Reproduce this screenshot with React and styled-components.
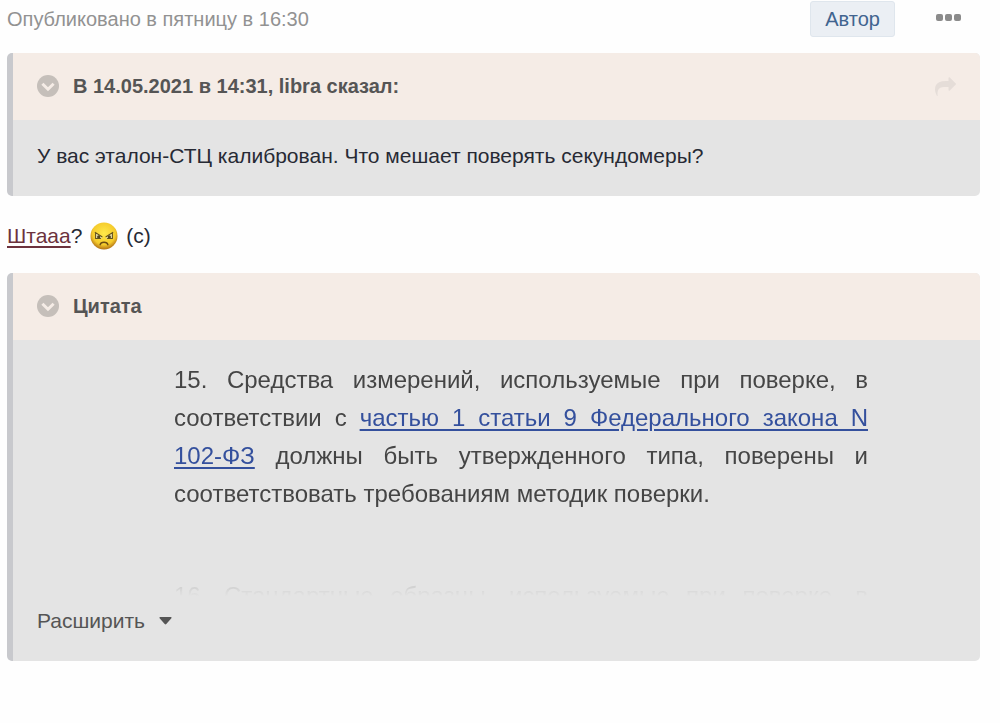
import React from "react";
import styled, { createGlobalStyle } from "styled-components";

const GlobalStyle = createGlobalStyle`
  * {
    box-sizing: border-box;
  }

  body {
    margin: 0;
    background: #fefefe;
    color: #272a34;
    font-family: "Liberation Sans", Arial, sans-serif;
    font-size: 21px;
    line-height: 32px;
  }

  p {
    margin: 0;
  }
`;

const Post = styled.article`
  padding: 1px 20px 20px 7px;
`;

const PostHeader = styled.header`
  display: flex;
  align-items: center;
  justify-content: space-between;
  height: 36px;
  margin-bottom: 16px;
`;

const Published = styled.time`
  color: #929292;
  font-size: 20px;
`;

const Tools = styled.div`
  display: flex;
  align-items: center;
  gap: 41px;
  padding-right: 19px;
`;

const AuthorBadge = styled.span`
  padding: 0 14px;
  border: 1px solid #dfe6ed;
  border-radius: 3px;
  background: #ebeff4;
  color: #41648f;
  font-size: 20px;
  line-height: 34px;
`;

const IconButton = styled.button`
  display: flex;
  padding: 0;
  border: 0;
  background: none;
  color: ${(props) => props.color};
  cursor: pointer;
`;

const Quote = styled.section`
  overflow: hidden;
  border-left: 6px solid #c8c9cd;
  border-radius: 5px;
  background: #e4e4e4;
`;

const Citation = styled.header`
  display: flex;
  align-items: center;
  gap: 14px;
  height: 67px;
  padding: 0 24px 2px;
  background: #f5ece6;
`;

const CitationText = styled.h2`
  flex: 1;
  margin: 0;
  color: #555555;
  font-size: 20px;
  line-height: 32px;
`;

const QuoteBody = styled.div`
  padding: 20px 24px 24px;
`;

const Reply = styled.p`
  display: flex;
  align-items: center;
  gap: 8px;
  padding: 24px 0 21px;
`;

const ReplyLink = styled.a`
  color: #6c323d;
  text-underline-offset: 3px;
`;

const Preview = styled.div`
  height: 256px;
  padding: 21px 112px 0 161px;
  overflow: hidden;
  color: #454545;
  font-size: 24px;
  line-height: 38px;
  text-align: justify;
  mask-image: linear-gradient(to bottom, #000 175px, transparent 100%);
`;

const NextClause = styled.p`
  margin-top: 64px;
  text-align-last: justify;
`;

const LawLink = styled.a`
  color: #34509d;
  text-underline-offset: 3px;
`;

const ExpandButton = styled.button`
  display: flex;
  align-items: center;
  gap: 14px;
  height: 65px;
  padding: 0 24px 15px;
  border: 0;
  background: none;
  color: #555555;
  font: inherit;
  cursor: pointer;
`;

function ToggleIcon() {
  return (
    <svg width="22" height="22" viewBox="0 0 22 22" aria-hidden="true">
      <circle cx="11" cy="11" r="11" fill="#c5bfba" />
      <path
        d="M5.4 8.700l5.600 5.500 5.600-5.500"
        fill="none"
        stroke="#f5ece6"
        strokeWidth="3"
      />
    </svg>
  );
}

function ShareIcon() {
  return (
    <svg width="21" height="21" viewBox="0 -128 1792 1792" fill="currentColor">
      <path d="M1792 640q0 26-19 45l-512 512q-19 19-45 19t-45-19-19-45V896H928q-98 0-175.500 6t-154 21.500-133 42.500-105.500 69.500-80 101-48.500 138.500-17.500 181q0 55 5 123 0 6 2.500 23.500t2.500 26.500q0 15-8.500 25t-23.500 10q-16 0-28-17-7-9-13-22t-13.500-30-10.500-24Q0 1286 0 1120q0-199 53-333 162-403 875-403h224V128q0-26 19-45t45-19 45 19l512 512q19 19 19 45z" />
    </svg>
  );
}

function DotsIcon() {
  return (
    <svg width="25" height="10" viewBox="0 0 25 10" fill="currentColor">
      <rect x="0" y="0" width="7" height="7" rx="2" />
      <rect x="9" y="0" width="7" height="7" rx="2" />
      <rect x="18" y="0" width="7" height="7" rx="2" />
    </svg>
  );
}

function AngryFace() {
  return (
    <svg width="28" height="28" viewBox="0 0 29 29" role="img" aria-label="angry">
      <defs>
        <radialGradient id="face" cx="0.5" cy="0.4" r="0.6">
          <stop offset="0" stopColor="#ffe94a" />
          <stop offset="0.700" stopColor="#f5cb2c" />
          <stop offset="1" stopColor="#b06f14" />
        </radialGradient>
      </defs>
      <circle cx="14.5" cy="14.5" r="14" fill="url(#face)" />
      <path d="M5.500 11.500l7 4.200-1.500 2H6.200zM23.500 11.500l-7 4.200 1.500 2h4.800z" fill="#eee4b0" />
      <circle cx="9" cy="15.500" r="1.700" fill="#53471f" />
      <circle cx="20" cy="15.500" r="1.700" fill="#53471f" />
      <path
        d="M5 10.500l7.800 5M24 10.500l-7.800 5M5.800 11.500v5.500h5.500M23.200 11.500v5.500h-5.500"
        fill="none"
        stroke="#62511d"
        strokeWidth="1.100"
      />
      <path
        d="M10.500 23.500q0.500-2.500 4-2.500t4 2.500"
        fill="none"
        stroke="#6b4c12"
        strokeWidth="1.500"
        strokeLinecap="round"
      />
    </svg>
  );
}

function QuoteHeader({ title, children }) {
  return (
    <Citation>
      <IconButton type="button" aria-label={title}>
        <ToggleIcon />
      </IconButton>
      <CitationText>{title}</CitationText>
      {children}
    </Citation>
  );
}

export default function App() {
  return (
    <>
      <GlobalStyle />
      <Post>
        <PostHeader>
          <Published>Опубликовано в пятницу в 16:30</Published>
          <Tools>
            <AuthorBadge>Автор</AuthorBadge>
            <IconButton type="button" color="#8b8b8b" aria-label="Меню">
              <DotsIcon />
            </IconButton>
          </Tools>
        </PostHeader>

        <Quote>
          <QuoteHeader title="В 14.05.2021 в 14:31, libra сказал:">
            <IconButton type="button" color="#e5ddd8" aria-label="Перейти">
              <ShareIcon />
            </IconButton>
          </QuoteHeader>
          <QuoteBody>
            <p>У вас эталон-СТЦ калиброван. Что мешает поверять секундомеры?</p>
          </QuoteBody>
        </Quote>

        <Reply>
          <span>
            <ReplyLink href="#">Штааа</ReplyLink>?
          </span>
          <AngryFace />
          <span>(с)</span>
        </Reply>

        <Quote>
          <QuoteHeader title="Цитата" />
          <Preview>
            <p>
              15. Средства измерений, используемые при поверке, в соответствии с{" "}
              <LawLink href="#">
                частью 1 статьи 9 Федерального закона N 102-ФЗ
              </LawLink>{" "}
              должны быть утвержденного типа, поверены и соответствовать
              требованиям методик поверки.
            </p>
            <NextClause>
              16. Стандартные образцы, используемые при поверке, в
            </NextClause>
          </Preview>
          <ExpandButton type="button">
            Расширить
            <svg width="13" height="8" viewBox="0 0 13 8" aria-hidden="true">
              <path d="M1 0h11q1 0.400 0.400 1.300L7.300 7q-0.800 0.900-1.600 0L0.600 1.300Q0 0.400 1 0z" fill="#555555" />
            </svg>
          </ExpandButton>
        </Quote>
      </Post>
    </>
  );
}
